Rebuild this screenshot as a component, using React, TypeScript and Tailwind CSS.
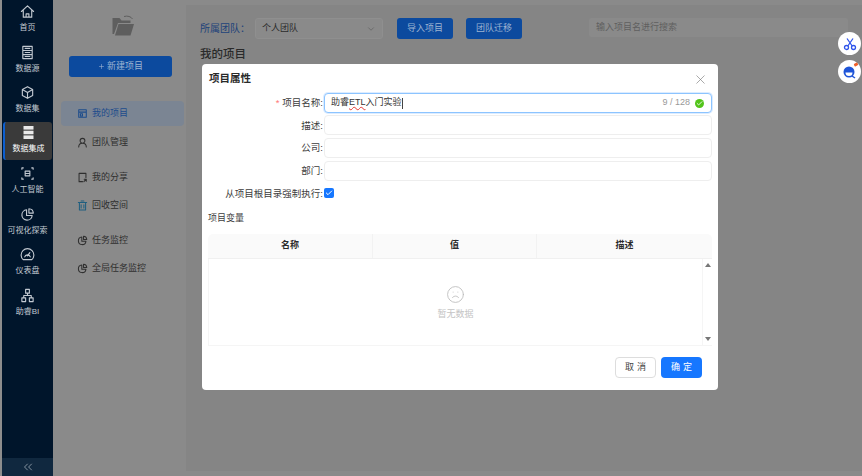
import React from 'react';
import { ChevronDown, ChevronsLeft, Check, X, Frown, Plus } from 'lucide-react';

const font = { fontFamily: '"Liberation Sans", "Noto Sans CJK SC", sans-serif' };

function Icon({ children, size = 16, className = '', stroke = 1.2 }: { children: React.ReactNode; size?: number; className?: string; stroke?: number }) {
  return (
    <svg width={size} height={size} viewBox="0 0 16 16" fill="none" stroke="currentColor" strokeWidth={stroke} strokeLinejoin="round" strokeLinecap="round" className={className}>
      {children}
    </svg>
  );
}

const pie = (
  <>
    <path d="M7 3a5.5 5.5 0 1 0 6 6H7z" />
    <path d="M9.5 1.8a5 5 0 0 1 4.7 4.7H9.5z" />
  </>
);

const railItems = [
  { label: '首页', h: 'h-[41px]', icon: <path d="M1.500 8l6.500-6 6.500 6M3.500 6.500v7.500h9V6.500M6.500 14v-3.500h3V14" /> },
  { label: '数据源', h: 'h-[40px]', icon: <path d="M3 1.500h10v13H3zM3 5.800h10M3 10.200h10M5.500 3.600h5M5.500 8h5M5.500 12.300h5" /> },
  { label: '数据集', h: 'h-[40px]', icon: <path d="M8 1.800l5.500 3v6.400L8 14.200l-5.500-3V4.800zM2.500 4.800L8 8l5.500-3.200M8 8v6.200" /> },
  { label: '数据集成', h: 'h-[41px]', active: true },
  { label: '人工智能', h: 'h-[41px]', icon: <path d="M2 3.500v-1.500h1.500M12.500 2H14v1.500M2 12.500V14h1.500M14 12.500V14h-1.500M5.500 5.500h5v5h-5zM5.500 8h5" /> },
  { label: '可视化探索', h: 'h-[40px]', icon: pie },
  { label: '仪表盘', h: 'h-[41px]', icon: <path d="M3.400 13.500a6.800 6.800 0 1 1 9.200 0zM5 10.500a3.200 3.200 0 0 1 6 0M8 9.500L10.500 6" /> },
  { label: '助睿BI', h: 'h-[40px]', icon: <path d="M6 1.500h4v4H6zM2 10.500h4v4H2zM10 10.500h4v4h-4zM8 5.500V8M4 10.500V8h8v2.500" /> },
];

function Rail() {
  return (
    <aside className="flex w-[53px] shrink-0 flex-col border-l-2 border-[#8d8d8d] bg-[#00152b]">
      <div className="flex flex-1 flex-col">
        {railItems.map(item =>
          item.active ? (
            <div key={item.label} className={item.h}>
              <div className="mx-[1px] mt-[1px] flex h-[38px] flex-col items-center rounded-[3px] border-l-2 border-[#0d5fd0] bg-[#3a3a3a] pt-[3px] text-white">
                <svg width="15" height="15" viewBox="0 0 15 15" fill="#e8e8e8">
                  <rect x="2.500" y="1" width="10" height="3.600" />
                  <rect x="2.500" y="5.700" width="10" height="3.600" />
                  <rect x="2.500" y="10.400" width="10" height="3.600" />
                </svg>
                <span className="mt-[3px] text-[8px] leading-[12px]">{item.label}</span>
              </div>
            </div>
          ) : (
            <div key={item.label} className={`flex flex-col items-center pt-[4px] text-[#c2c9d1] ${item.h}`}>
              <Icon size={15}>{item.icon}</Icon>
              <span className="mt-[3px] whitespace-nowrap text-[8px] leading-[12px]">{item.label}</span>
            </div>
          )
        )}
      </div>
      <div className="flex h-[18px] items-center justify-center bg-[#10283f] text-[#a8b2bd]">
        <ChevronsLeft size={14} strokeWidth={1.300} />
      </div>
    </aside>
  );
}

const navItems = [
  { label: '我的项目', active: true, icon: <path d="M2.500 2.500h11v11h-11zM2.500 6h11M5 8.500h3v3H5z" /> },
  { label: '团队管理', mt: 'mt-[4px]', icon: <path d="M8 2a3.500 3.500 0 1 1 0 7 3.500 3.500 0 0 1 0-7zM2.500 14.500c0-3 2-5.500 5.500-5.500s5.500 2.500 5.500 5.500" /> },
  { label: '我的分享', mt: 'mt-[10px]', icon: <path d="M13 8V2H3v12h5M10 14l3.500-3.500M10.500 10.500h3v3" /> },
  { label: '回收空间', mt: 'mt-[3px]', teal: true, icon: <path d="M2 3.500h12M3.500 3.500v11h9v-11M6 1.500h4M6 7v4.500M10 7v4.500" /> },
  { label: '任务监控', mt: 'mt-[10px]', icon: pie },
  { label: '全局任务监控', mt: 'mt-[3px]', icon: pie },
];

function ProjectNav() {
  return (
    <nav className="flex w-[133px] shrink-0 flex-col bg-[#8a8a8a] pl-[8px] pr-[2px]">
      <div className="ml-[51px] mt-[15px] w-[22px] text-[#5e5e5e]">
        <svg width="22" height="21" viewBox="0 0 22 21" fill="currentColor">
          <path d="M0.500 3h7l2 2.500h9V8H6L2 19H0.500z" />
          <path d="M6.500 9H22l-3.500 11.500H3z" />
          <path d="M12 1.500c3.500-1 7 0 8.500 2.500" fill="none" stroke="currentColor" strokeWidth="1" />
        </svg>
      </div>
      <button className="ml-[8px] mt-[20px] flex h-[21px] w-[103px] items-center justify-center gap-[2px] rounded-[3px] bg-[#0c4a9e] text-[9px] text-[#9db4d2]">
        <Plus size={7} />
        新建项目
      </button>
      <ul className="mt-[24px]">
        {navItems.map(item => (
          <li
            key={item.label}
            className={`flex h-[25px] items-center gap-[4px] rounded-[4px] pl-[16px] text-[9px] ${item.mt ?? ''} ${
              item.active ? 'bg-[#7b8593] text-[#1d4c8c]' : 'text-[#2f2f2f]'
            }`}
          >
            <Icon size={11} stroke={1.500} className={item.active ? 'text-[#1d4c8c]' : item.teal ? 'text-[#1f5f80]' : 'text-[#2f2f2f]'}>
              {item.icon}
            </Icon>
            {item.label}
          </li>
        ))}
      </ul>
    </nav>
  );
}

function Toolbar() {
  return (
    <div className="flex flex-col pl-[14px]">
      <div className="mt-[13px] flex items-start">
        <span className="h-[21px] w-[55px] whitespace-nowrap text-[10px] leading-[21px] text-[#21437a]">所属团队：</span>
        <div className="flex h-[21px] w-[128px] items-center justify-between rounded-[3px] border border-[#8f8f8f] bg-[#8a8a8a] px-[6px] text-[9px] text-[#2a2a2a]">
          个人团队
          <ChevronDown size={10} className="text-[#666666]" />
        </div>
        <button className="ml-[14px] h-[21px] w-[56px] rounded-[3px] bg-[#0c4a9e] text-[9px] text-[#9db4d2]">导入项目</button>
        <button className="ml-[13px] h-[21px] w-[56px] rounded-[3px] bg-[#0c4a9e] text-[9px] text-[#9db4d2]">团队迁移</button>
        <div className="ml-[67px] flex h-[19px] w-[259px] items-center rounded-[2px] bg-[#8a8a8a] px-[7px] text-[9px] text-[#5f5f5f]">输入项目名进行搜索</div>
      </div>
      <h2 className="mt-[8px] text-[11.500px] font-medium leading-[14px] text-[#2a2a2a]">我的项目</h2>
    </div>
  );
}

function Field({ label, required, children, focused }: { label: string; required?: boolean; children?: React.ReactNode; focused?: boolean }) {
  return (
    <div className="flex h-[19px] items-center">
      <label className="flex w-[122px] shrink-0 items-center justify-end pr-[1px] pt-[1px] text-[9.500px] text-[#3c3c3c]">
        {required && <span className="mr-[3px] text-[#ff7875]">*</span>}
        {label}:
      </label>
      <div className={`flex h-[20px] flex-1 items-center rounded-[4px] border bg-white pl-[6px] pr-[7px] pt-[1px] text-[9px] text-[#333333] ${focused ? 'border-[#8cc4ff] shadow-[0_0_0_1px_#dcecff]' : 'border-[#eeeeee]'}`}>
        {children}
      </div>
    </div>
  );
}

function VariableTable() {
  return (
    <div className="mx-[6px] mt-[9px]">
      <div className="grid h-[25px] grid-cols-[165px_164px_1fr] rounded-t-[5px] border-b border-[#f0f0f0] bg-[#fafafa] text-[9px] font-bold text-[#2b2b2b]">
        <div className="flex items-center justify-center border-r border-[#f2f2f2]">名称</div>
        <div className="flex items-center justify-center border-r border-[#f2f2f2]">值</div>
        <div className="flex items-center justify-center">描述</div>
      </div>
      <div className="flex h-[87px] border-b border-l border-[#f5f5f5]">
        <div className="flex flex-1 flex-col items-center pt-[26px] text-[#bcbcbc]">
          <Frown size={19} strokeWidth={1.100} />
          <span className="mt-[4px] text-[9px] leading-[12px] text-[#c4c4c4]">暂无数据</span>
        </div>
        <div className="flex w-[10px] flex-col items-center justify-between border-l border-[#f5f5f5] py-[4px]">
          <span className="h-0 w-0 border-x-[3px] border-b-[4px] border-x-transparent border-b-[#777777]" />
          <span className="h-0 w-0 border-x-[3px] border-t-[4px] border-x-transparent border-t-[#777777]" />
        </div>
      </div>
    </div>
  );
}

function ProjectDialog() {
  return (
    <div className="absolute left-[202px] top-[64px] flex h-[326px] w-[516px] flex-col rounded-[4px] bg-white">
      <div className="flex h-[29px] items-center justify-between pl-[7px] pr-[10px] pt-[1px]">
        <h3 className="text-[10.500px] font-bold text-[#2a2a2a]">项目属性</h3>
        <X size={15} strokeWidth={1} className="text-[#777777]" />
      </div>
      <div className="flex flex-col gap-[3.700px] pr-[6px]">
        <Field label="项目名称" required focused>
          <span>
            助睿<span className="underline decoration-wavy decoration-[#e53935] decoration-[0.500px]">ETL</span>入门实验
          </span>
          <span className="h-[11px] w-px bg-[#444444]" />
          <span className="ml-auto text-[9px] text-[#999999]">9 / 128</span>
          <span className="ml-[5px] flex h-[9px] w-[9px] items-center justify-center rounded-full bg-[#52c41a] text-white">
            <Check size={7} strokeWidth={3} />
          </span>
        </Field>
        <Field label="描述" />
        <Field label="公司" />
        <Field label="部门" />
        <div className="flex h-[19px] items-center">
          <label className="w-[122px] shrink-0 whitespace-nowrap pr-[1px] pt-[1px] text-right text-[9.500px] text-[#3c3c3c]">从项目根目录强制执行:</label>
          <span className="flex h-[10px] w-[10px] items-center justify-center rounded-[2px] bg-[#1677ff] text-white">
            <Check size={8} strokeWidth={3} />
          </span>
        </div>
      </div>
      <div className="mt-[8px] pl-[6px] text-[9px] leading-[14px] text-[#3c3c3c]">项目变量</div>
      <VariableTable />
      <div className="mt-[11px] flex justify-end gap-[5px] pr-[16px]">
        <button className="h-[21px] w-[41px] rounded-[4px] border border-[#dddddd] bg-white pl-[3px] text-[9px] tracking-[3px] text-[#444444]">取消</button>
        <button className="h-[21px] w-[41px] rounded-[4px] bg-[#1677ff] pl-[3px] text-[9px] tracking-[3px] text-white">确定</button>
      </div>
    </div>
  );
}

function FloatingTools() {
  return (
    <div className="absolute right-[1px] top-[32px] flex flex-col gap-[5px]">
      <div className="flex h-[23px] w-[23px] items-center justify-center rounded-full bg-white text-[#2f54eb]">
        <svg width="14" height="14" viewBox="0 0 14 14" fill="none" stroke="currentColor" strokeWidth="1.300">
          <circle cx="3.500" cy="10.500" r="2" />
          <circle cx="10.500" cy="10.500" r="2" />
          <path d="M4.800 9L10 1.500M9.200 9L4 1.500" />
        </svg>
      </div>
      <div className="relative flex h-[23px] w-[23px] items-center justify-center rounded-full bg-white">
        <svg width="15" height="15" viewBox="0 0 15 15">
          <circle cx="7" cy="8" r="5.500" fill="#1f55d8" />
          <path d="M3.500 8.500h7a3.500 3.500 0 0 1-7 0z" fill="#ffffff" />
          <path d="M10 12l3 2" stroke="#1f55d8" strokeWidth="1.500" />
        </svg>
        <span className="absolute right-[3px] top-[3px] h-[3px] w-[4px] rotate-[-30deg] rounded-[1px] bg-[#f0602a]" />
      </div>
    </div>
  );
}

export default function App() {
  return (
    <div className="relative flex h-[476px] w-[862px] overflow-hidden bg-[#8a8a8a]" style={font}>
      <Rail />
      <ProjectNav />
      <main className="my-[5px] flex-1 bg-[#858585]">
        <Toolbar />
      </main>
      <ProjectDialog />
      <FloatingTools />
    </div>
  );
}
